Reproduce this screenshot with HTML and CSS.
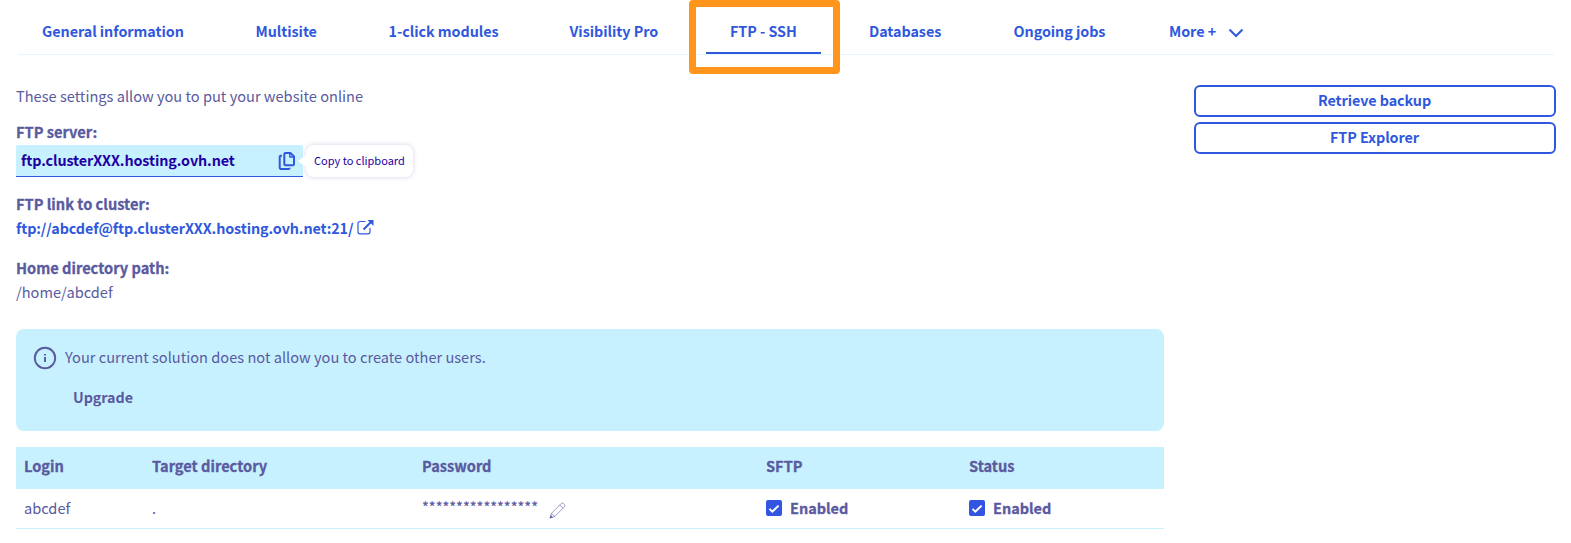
FILE: index.html
```html
<!DOCTYPE html>
<html lang="en">
<head>
<meta charset="utf-8">
<title>FTP - SSH</title>
<link rel="stylesheet" href="styles.css">
</head>
<body>
<nav class="tabs">
  <a class="tab tab-general"><span>General information</span></a>
  <a class="tab tab-multisite"><span>Multisite</span></a>
  <a class="tab tab-modules"><span>1-click modules</span></a>
  <a class="tab tab-visibility"><span>Visibility Pro</span></a>
  <a class="tab tab-ftp active"><span>FTP - SSH</span><i class="highlight"></i></a>
  <a class="tab tab-databases"><span>Databases</span></a>
  <a class="tab tab-jobs"><span>Ongoing jobs</span></a>
  <a class="tab tab-more"><span>More +</span><svg class="chevron" width="16" height="10" viewBox="0 0 16 10"><path d="M1.500 1.500 8 8l6.500-6.500" fill="none" stroke="currentColor" stroke-width="2"/></svg></a>
</nav>
<div class="page">
  <main class="main">
    <p class="intro">These settings allow you to put your website online</p>
    <section class="field server">
      <h2 class="label">FTP server:</h2>
      <div class="copy-row">
        <div class="copy-field">
          <span class="copy-value">ftp.clusterXXX.hosting.ovh.net</span>
          <svg class="copy-icon" width="18" height="20" viewBox="0 0 18 20" fill="none" stroke="currentColor" stroke-width="2" stroke-linejoin="round"><path d="M7.500 2h5L16 5.500V13a1.200 1.200 0 0 1-1.200 1.200H7.500A1.200 1.200 0 0 1 6.300 13V3.200A1.200 1.200 0 0 1 7.500 2Z"/><path d="M11.800 2v4H16" stroke-width="1.400"/><path d="M4 4.700H2.800A1.100 1.100 0 0 0 1.700 5.800v11A1.200 1.200 0 0 0 2.900 18h7.600a1.200 1.200 0 0 0 1.200-1.200"/></svg>
        </div>
        <div class="tooltip">Copy to clipboard</div>
      </div>
    </section>
    <section class="field link-field">
      <h2 class="label">FTP link to cluster:</h2>
      <a class="link"><span>ftp://abcdef@ftp.clusterXXX.hosting.ovh.net:21/</span><svg class="external" width="17" height="15" viewBox="0 0 17 15" fill="none" stroke="currentColor"><path d="M8.500 1.500H3A2 2 0 0 0 1 3.500v8.300a2 2 0 0 0 2 2h8a2 2 0 0 0 2-2V8" stroke-width="1.200"/><path d="M6.500 9.500 14 2" stroke-width="2"/><path d="M10.500 0H16.500V6Z" fill="currentColor" stroke="none"/></svg></a>
    </section>
    <section class="field home">
      <h2 class="label">Home directory path:</h2>
      <p class="value">/home/abcdef</p>
    </section>
    <div class="alert">
      <svg class="info" width="24" height="24" viewBox="0 0 24 24" fill="none" stroke="currentColor" stroke-width="1.900"><circle cx="12" cy="12" r="10.200"/><path d="M12 11v5M12 8v1.600"/></svg>
      <div class="alert-body">
        <p class="alert-text">Your current solution does not allow you to create other users.</p>
        <a class="upgrade">Upgrade</a>
      </div>
    </div>
    <table class="users">
      <thead>
        <tr><th class="c-login">Login</th><th class="c-target">Target directory</th><th class="c-password">Password</th><th class="c-sftp">SFTP</th><th>Status</th></tr>
      </thead>
      <tbody>
        <tr>
          <td>abcdef</td>
          <td>.</td>
          <td><div class="password"><span class="stars">*****************</span><svg class="pencil" width="17" height="17" viewBox="0 0 17 17" fill="none" stroke="currentColor" stroke-width=".6"><path d="M1 16 2.600 11.200 12.300 1.500a1.500 1.500 0 0 1 2.100 0l1.100 1.100a1.500 1.500 0 0 1 0 2.100L5.800 14.400ZM10.800 3l3.200 3.200M2.600 11.200l3.200 3.200"/><path d="M1 16l.8-2.500 1.700 1.700Z" fill="currentColor"/></svg></div></td>
          <td><div class="check"><svg width="16" height="16" viewBox="0 0 16 16"><rect width="16" height="16" rx="2" fill="#3355e2"/><path d="m3.500 8.900 2.800 2.700 6.300-6" fill="none" stroke="#fff" stroke-width="2"/></svg><b>Enabled</b></div></td>
          <td><div class="check"><svg width="16" height="16" viewBox="0 0 16 16"><rect width="16" height="16" rx="2" fill="#3355e2"/><path d="m3.500 8.900 2.800 2.700 6.300-6" fill="none" stroke="#fff" stroke-width="2"/></svg><b>Enabled</b></div></td>
        </tr>
      </tbody>
    </table>
  </main>
  <aside class="actions">
    <button class="action">Retrieve backup</button>
    <button class="action">FTP Explorer</button>
  </aside>
</div>
</body>
</html>
```
FILE: styles.css
```css
* { box-sizing: border-box; }
body {
  margin: 0;
  background: #fff;
  color: #5a5a9f;
  font: 14.620px/24px "Noto Sans CJK SC", "Noto Sans", sans-serif;
  white-space: nowrap;
}
p, h2 { margin: 0; }
.tabs {
  display: flex;
  height: 55px;
  margin: 0 17px 0 18px;
  border-bottom: 1px solid #e2f7fe;
  color: #3058dc;
  font-size: 14.350px;
  font-weight: 700;
  letter-spacing: -.05px;
}
.tab { position: relative; height: 54px; padding: 19px 0 0 24px; }
.tab-general { width: 213.500px; }
.tab-multisite { width: 133px; }
.tab-modules { width: 181px; }
.tab-visibility { width: 160.500px; }
.tab-ftp { width: 115px; margin-right: 24px; }
.tab-databases { width: 144.500px; }
.tab-jobs { width: 155.500px; }
.tab-more { display: flex; align-items: flex-start; }
.active { border-bottom: 2px solid #3058dc; }
.highlight {
  position: absolute;
  left: -17px;
  top: 0;
  width: 151px;
  height: 74px;
  border: 7px solid #ff961b;
  border-radius: 4px;
}
.chevron { margin: 9px 0 0 12px; }
.page { display: flex; justify-content: space-between; padding: 29px 15px 0 16px; }
.main { width: 1148px; }
.intro { margin-bottom: 12px; }
.label { font-size: inherit; font-weight: 700; line-height: 24px; -webkit-text-stroke: .3px; }
.copy-row { display: flex; gap: 3px; height: 32px; margin-top: 1px; }
.copy-field {
  display: flex;
  align-items: center;
  justify-content: space-between;
  width: 287px;
  padding: 0 7px 0 5px;
  border-bottom: 1px solid #3058dc;
  border-radius: 2px 2px 0 0;
  background: #c8f1ff;
}
.copy-value {
  padding-bottom: 2px;
  color: #1e00a5;
  font-size: 14.350px;
  font-weight: 700;
  letter-spacing: -.1px;
}
.copy-icon { color: #3058dc; }
.tooltip {
  position: relative;
  width: 107px;
  padding-left: 8px;
  border-radius: 8px;
  background: #fff;
  box-shadow: 0 0 5px rgba(60, 40, 160, .22);
  color: #1e00a5;
  font-size: 11px;
  line-height: 31px;
}
.tooltip::before {
  content: "";
  position: absolute;
  left: -8px;
  top: 10px;
  border: 6px solid transparent;
  border-right: 8px solid #fff;
  border-left: 0;
}
.field { margin-bottom: 16px; }
.server { margin-bottom: 15px; }
.link {
  display: flex;
  gap: 4px;
  color: #3058dc;
  font-size: 14.350px;
  font-weight: 700;
  letter-spacing: -.1px;
}
.external { margin-top: 4px; }
.home { margin-bottom: 25px; }
.alert {
  display: flex;
  gap: 8px;
  height: 102px;
  padding: 16px 17px;
  border-radius: 8px;
  background: #c8f1ff;
}
.info { margin-top: 1px; }
.upgrade {
  display: block;
  margin: 16px 0 0 8px;
  font-size: 14.350px;
  font-weight: 700;
  letter-spacing: -.07px;
}
.users { width: 100%; margin-top: 16px; border-spacing: 0; table-layout: fixed; }
.users th {
  height: 42px;
  padding: 0 8px 4px;
  background: #c8f1ff;
  text-align: left;
  font-weight: 700;
  -webkit-text-stroke: .3px;
}
.users td { height: 40px; padding: 0 8px 1px; border-bottom: 1px solid #c8f1ff; }
.c-login { width: 128px; }
.c-target { width: 270px; }
.c-password { width: 344px; }
.c-sftp { width: 203px; }
.password { display: flex; gap: 11px; }
.stars { margin-top: -3px; -webkit-text-stroke: .2px; }
.pencil { margin-top: 4px; }
.check { display: flex; align-items: center; gap: 8px; }
.check b { font-size: 14.450px; -webkit-text-stroke: .3px; }
.actions { display: flex; flex-direction: column; gap: 5px; width: 362px; margin-top: 1px; }
.action {
  height: 32px;
  padding: 0 1px 2px 0;
  border: 2px solid #3058dc;
  border-radius: 6px;
  background: #fff;
  color: #3058dc;
  font: inherit;
  font-size: 14.350px;
  font-weight: 700;
  letter-spacing: -.07px;
}
```
